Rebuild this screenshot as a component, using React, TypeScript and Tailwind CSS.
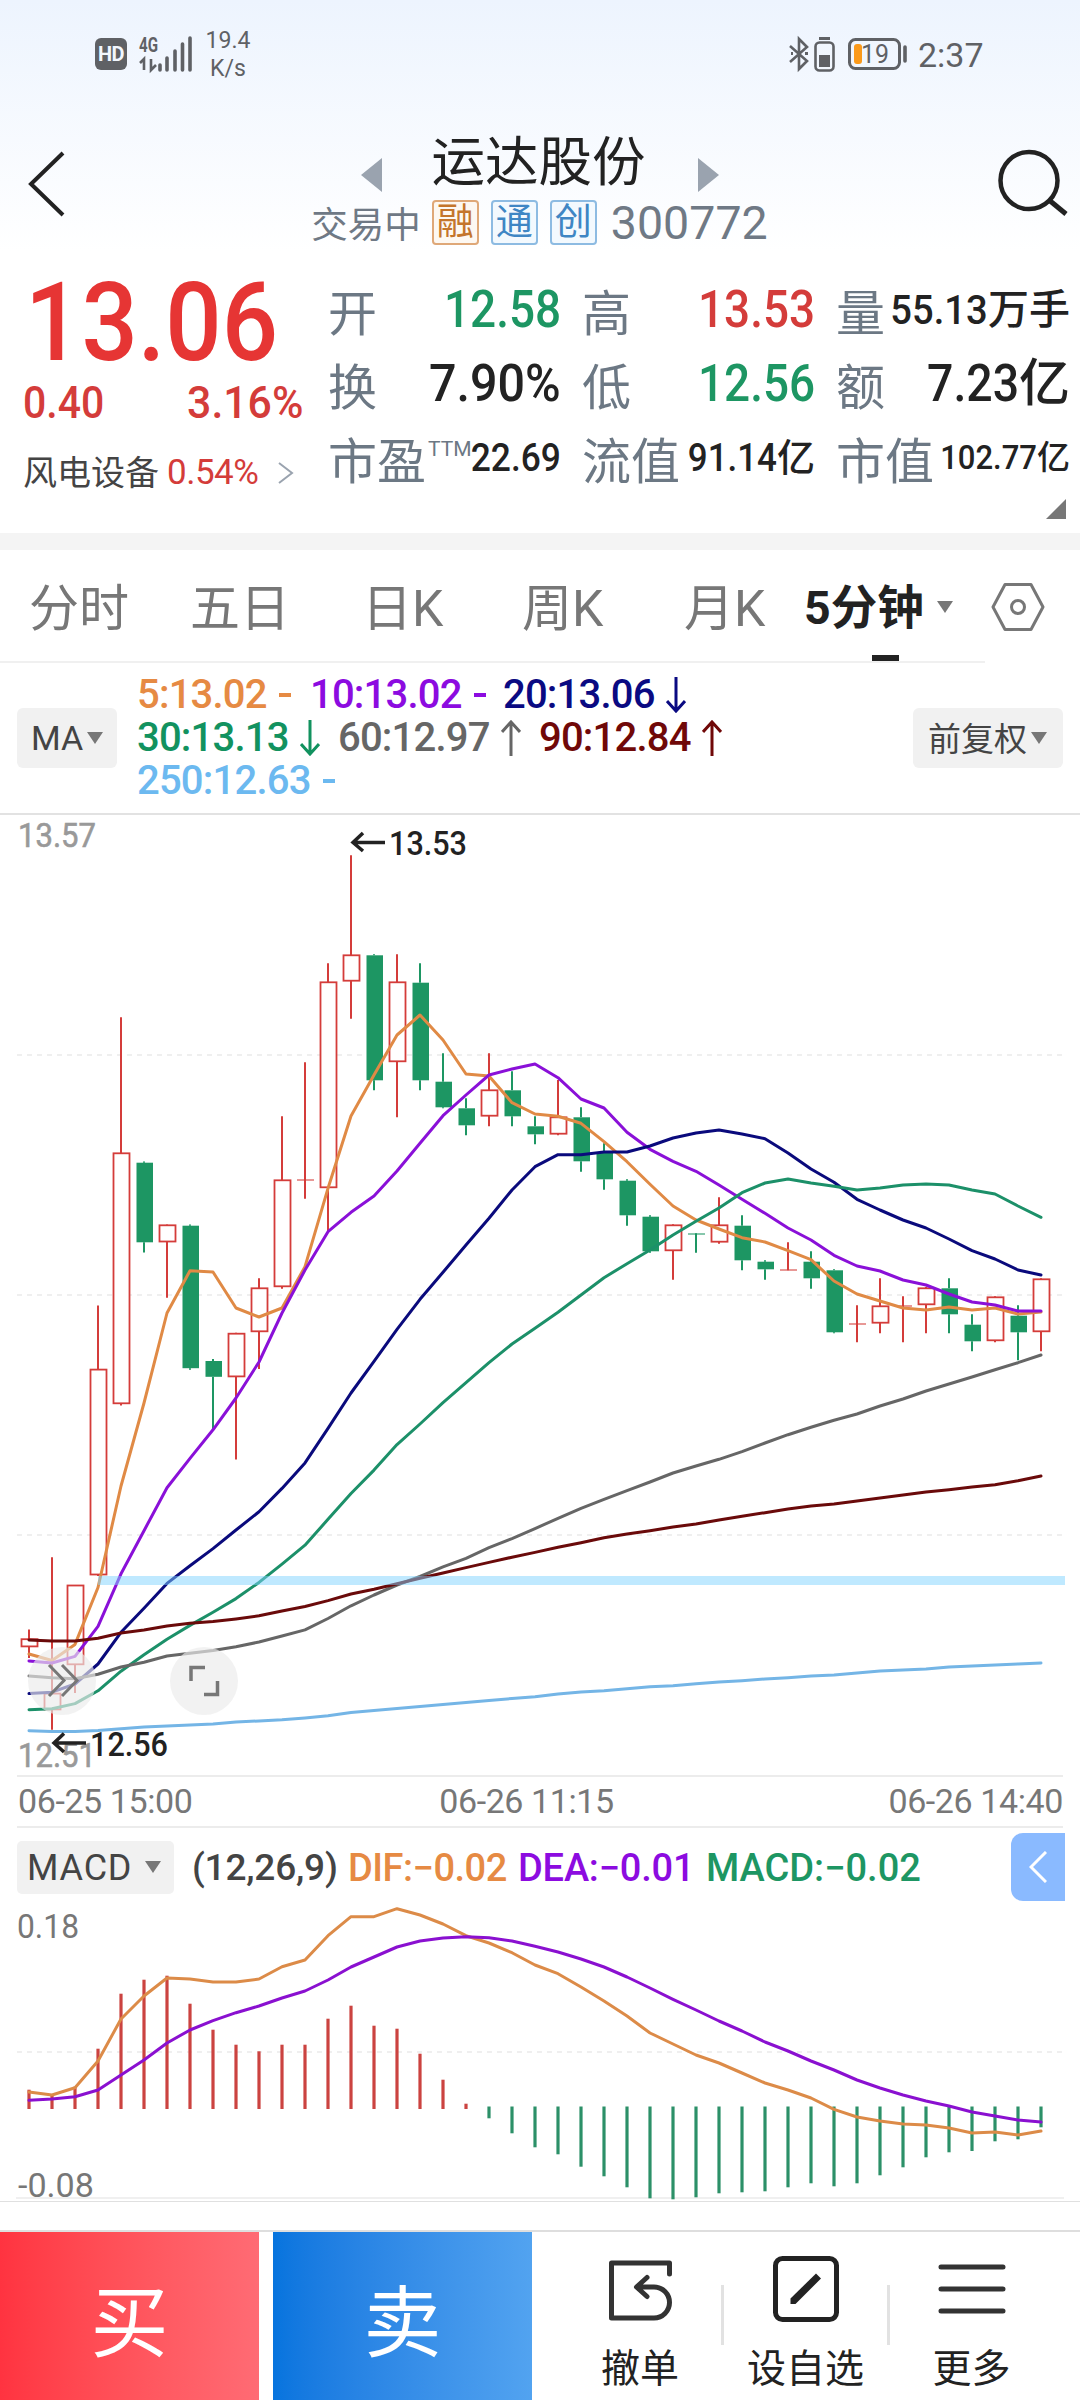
import { ReactNode } from 'react';
import clsx from 'clsx';

const RED = '#d43c3a';
const GREEN = '#1d9663';

const STEP = 23;
const FIRST_X = 29;
const xAt = (i: number) => FIRST_X + i * STEP;

// [direction, high, body top, body bottom, low]
type Candle = ['up' | 'down', number, number, number, number];

const candles: Candle[] = [
    ['up', 1629.5, 1639.2, 1646.4, 1658],
    ['up', 1557.2, 1693.6, 1709.4, 1729.8],
    ['up', 1585, 1585.5, 1664.3, 1693],
    ['up', 1305.5, 1369.6, 1574.5, 1576],
    ['up', 1017.3, 1153.3, 1403.3, 1405.5],
    ['down', 1161.5, 1162.7, 1242.3, 1252.5],
    ['up', 1224.5, 1225.3, 1241.5, 1297.7],
    ['down', 1224.5, 1225.7, 1368.2, 1369.7],
    ['down', 1359, 1361, 1376.8, 1429],
    ['up', 1332.7, 1333.7, 1376.4, 1459.4],
    ['up', 1278.3, 1288.3, 1331.3, 1369],
    ['up', 1116.3, 1180.3, 1286.3, 1288.7],
    ['up', 1062.3, 1180, 1180, 1198.7],
    ['up', 963.3, 982.3, 1187.3, 1231.7],
    ['up', 855.3, 955.3, 980.7, 1018.7],
    ['down', 954.3, 955.3, 1080.3, 1090.3],
    ['up', 954.3, 982.3, 1061.3, 1117.3],
    ['down', 963.3, 982.7, 1080.3, 1090.3],
    ['down', 1053.3, 1081.7, 1107.3, 1108.3],
    ['down', 1098.3, 1108.3, 1125.3, 1135.3],
    ['up', 1053.3, 1090.3, 1115.7, 1126.3],
    ['down', 1071.3, 1090.3, 1116.3, 1126.3],
    ['down', 1116.3, 1126.3, 1134.3, 1144.3],
    ['up', 1080, 1117.3, 1133.7, 1135.3],
    ['down', 1107.3, 1117.3, 1161.3, 1171.7],
    ['down', 1143.3, 1152.7, 1179.3, 1189.7],
    ['down', 1179.3, 1180.7, 1215.3, 1225.7],
    ['down', 1215.3, 1216.7, 1251.3, 1252.7],
    ['up', 1224.3, 1225.3, 1250.3, 1279.7],
    ['down', 1233.3, 1234, 1234, 1252.7],
    ['up', 1197.3, 1225.3, 1241.7, 1243.7],
    ['down', 1215.3, 1225.7, 1260.3, 1270.3],
    ['down', 1260.3, 1261.7, 1269.3, 1279.7],
    ['up', 1242.3, 1270, 1270, 1270.3],
    ['down', 1251.3, 1261.7, 1278.3, 1288.7],
    ['down', 1269.3, 1270.3, 1332.3, 1333.3],
    ['up', 1305.3, 1324, 1324, 1342.3],
    ['up', 1278.3, 1306.3, 1322.7, 1333.3],
    ['up', 1296.3, 1306, 1306, 1342.3],
    ['up', 1287, 1288.3, 1304.3, 1333.3],
    ['down', 1278.3, 1288.3, 1314.3, 1333.3],
    ['down', 1314.3, 1324.7, 1341.3, 1351.3],
    ['up', 1296.3, 1297.3, 1340.3, 1342.3],
    ['down', 1305.3, 1315.7, 1332.3, 1360.3],
    ['up', 1278.3, 1279.3, 1331.3, 1351.3],
];

const ma5 = [1654, 1660.5, 1644.4, 1587.5, 1486, 1403, 1313, 1270.7, 1272, 1308, 1317, 1308, 1266.7, 1188.3, 1116, 1075, 1035, 1015, 1040, 1074, 1076, 1102.7, 1114, 1116.3, 1123.3, 1141.7, 1161.7, 1184.3, 1206, 1220, 1229, 1237.7, 1242, 1250.7, 1259.7, 1281, 1294, 1301, 1308, 1310, 1307, 1310, 1308, 1314, 1312];
const ma10 = [1661, 1663, 1656.4, 1626.4, 1573.8, 1530.7, 1487.7, 1458.4, 1429.8, 1398, 1362, 1313, 1270, 1231.7, 1212.3, 1196, 1171, 1143.3, 1115.7, 1095, 1075, 1069, 1064, 1077.7, 1099, 1108, 1132.3, 1149.3, 1161.3, 1171.3, 1185, 1199.3, 1213.3, 1228, 1240, 1255.3, 1266, 1271, 1280, 1285, 1294, 1302, 1305, 1311, 1311];
const ma20 = [1693.6, 1692.2, 1684, 1664, 1632.3, 1608.2, 1583.4, 1565.8, 1548.6, 1530, 1511.8, 1488.4, 1462.9, 1428.4, 1393, 1361.3, 1329.3, 1299.3, 1272.3, 1245, 1218.3, 1190, 1166.7, 1154.7, 1154.7, 1152, 1152, 1146, 1138, 1133, 1130, 1134, 1138.7, 1153, 1169, 1182.3, 1199.3, 1210, 1220, 1228, 1239, 1250.7, 1259, 1270, 1275];
const ma30 = [1709.8, 1708.8, 1703.6, 1690.8, 1671.2, 1654.7, 1639.2, 1625.4, 1612.3, 1598.6, 1582.4, 1564.1, 1545.2, 1519.3, 1493.5, 1470.1, 1444.6, 1424, 1402.6, 1382.6, 1362.7, 1344, 1328.2, 1312.3, 1295, 1277.7, 1263.7, 1250, 1235, 1221.3, 1208, 1192.7, 1183, 1179, 1183, 1186.3, 1190, 1188, 1185, 1184, 1185, 1190, 1194, 1206, 1217.3];
const ma60 = [1676, 1677.8, 1678.8, 1674.3, 1667, 1662.3, 1656, 1653.3, 1650.5, 1646.8, 1642, 1636, 1629.9, 1618.5, 1605.8, 1595, 1585, 1576.5, 1566.9, 1558.3, 1547.6, 1538.6, 1528.6, 1518.3, 1508.3, 1499.3, 1490.7, 1482, 1473, 1466, 1459.3, 1451.7, 1443, 1434.7, 1427.3, 1420.3, 1414, 1406, 1399, 1391, 1384, 1377, 1369.7, 1362.7, 1355];
const ma90 = [1639.9, 1641, 1641, 1638.2, 1633, 1629.9, 1626, 1623.3, 1621.6, 1618.9, 1615.8, 1611, 1606.5, 1600.6, 1594, 1589.3, 1583.7, 1578.2, 1573, 1567.6, 1562.4, 1557.2, 1552.4, 1547.3, 1542.7, 1537.7, 1534, 1530.7, 1527, 1524, 1520, 1516.3, 1512.7, 1509, 1506, 1504, 1501, 1498, 1495, 1492, 1489.7, 1487, 1484.7, 1480.7, 1476];
const ma250 = [1730.8, 1731.5, 1731.5, 1730.4, 1728.7, 1727, 1726, 1725, 1723.9, 1722, 1720.9, 1719.8, 1717.9, 1715.7, 1712.5, 1710.5, 1708.6, 1706.6, 1704.6, 1702.5, 1700.5, 1698.5, 1696.8, 1694, 1692, 1690.7, 1688.7, 1686.7, 1685.7, 1683.8, 1682, 1680.7, 1679, 1677.7, 1676, 1675, 1673, 1671, 1670, 1669, 1667, 1666, 1665, 1664, 1663];

const dif = [2092, 2095, 2087.7, 2061, 2019, 1996, 1978, 1979, 1982, 1982, 1979, 1966.7, 1960, 1935.7, 1916.7, 1916.7, 1908.7, 1915, 1924, 1935.7, 1943, 1952.7, 1965, 1973.7, 1987, 2001, 2016, 2033, 2044, 2055, 2063, 2073, 2083, 2090, 2098, 2109.3, 2117, 2121, 2124, 2125, 2128, 2133, 2132, 2135, 2131];
const dea = [2100.3, 2099, 2096.7, 2090, 2075, 2060, 2043, 2030, 2020.7, 2012.7, 2006, 1998, 1991, 1980, 1967, 1957, 1947, 1941, 1938, 1936.7, 1937.7, 1941, 1946.3, 1952, 1959, 1967, 1977, 1988, 1999.3, 2010, 2021, 2031, 2042, 2051, 2061, 2070, 2080, 2088, 2095, 2101, 2106, 2112, 2116, 2120, 2122];
const hist = [2089.7, 2095.7, 2086.7, 2048.7, 1993.7, 1979.7, 1975.7, 2003.7, 2029.7, 2044.7, 2051.3, 2044.7, 2044.7, 2018.7, 2005.7, 2025.7, 2028.7, 2053.7, 2079.7, 2103.7, 2118.3, 2133.3, 2147.3, 2154.3, 2166.7, 2176.3, 2187.3, 2198.3, 2199.3, 2197.3, 2193.3, 2192.3, 2191.3, 2187.3, 2183.3, 2186.3, 2183.3, 2175.3, 2167.3, 2157.3, 2152.3, 2151, 2141.3, 2139.3, 2127.3];

const Line = ({ data, color, width = 3 }: { data: number[]; color: string; width?: number }) => (
    <polyline
        points={data.map((y, i) => `${xAt(i)},${y}`).join(' ')}
        fill="none"
        stroke={color}
        strokeWidth={width}
        strokeLinejoin="round"
        strokeLinecap="round"
    />
);

const Caret = ({ className }: { className?: string }) => (
    <svg viewBox="0 0 16 12" className={clsx('w-4 h-3 shrink-0', className)}>
        <path d="M0 0H16L8 12Z" fill="#777" />
    </svg>
);

function StatusBar() {
    return (
        <div className="h-[108px] flex items-center text-[#5f6165]">
            <div className="ml-[95px] w-8 h-8 rounded-md bg-[#5f6165] text-[#f2f7fe] text-[20px] font-bold flex items-center justify-center tracking-tight">HD</div>
            <svg viewBox="138 34 56 40" className="ml-[11px] w-14 h-10">
                <text x="139" y="52" fontSize="20" fontWeight="700" fill="#5f6165" textLength="19" lengthAdjust="spacingAndGlyphs">4G</text>
                <path d="M140 63L144 59V70M151 59V70L156 65" fill="none" stroke="#5f6165" strokeWidth="2.6" />
                <path d="M160 65V70M167 58V70M175 51V70M182.500 44V70M190 38V70" stroke="#5f6165" strokeWidth="3.600" strokeLinecap="round" />
            </svg>
            <div className="mt-[2px] ml-[10px] text-[23px] leading-[28px] w-12 text-center">
                <div>19.4</div>
                <div>K/s</div>
            </div>
            <svg viewBox="786 34 126 40" className="ml-auto w-[126px] h-10">
                <path d="M790 46L807 61L799 69V39L807 47L790 62" fill="none" stroke="#5f6165" strokeWidth="2.600" />
                <path d="M791 53.500H793M805 53.500H808" stroke="#5f6165" strokeWidth="3" />
                <rect x="815.500" y="42.500" width="18" height="28" rx="4" fill="none" stroke="#5f6165" strokeWidth="2.600" />
                <path d="M819 38.500H830" stroke="#5f6165" strokeWidth="3" />
                <rect x="819" y="55" width="11" height="12" fill="#5f6165" />
                <rect x="849.500" y="39.500" width="50" height="29" rx="6" fill="none" stroke="#5f6165" strokeWidth="3" />
                <path d="M905 47V61" stroke="#5f6165" strokeWidth="3.600" strokeLinecap="round" />
                <rect x="854" y="44" width="8" height="20" rx="3" fill="#fb9a1b" />
                <text x="861" y="63" fontSize="25" fill="#5f6165" textLength="28" lengthAdjust="spacingAndGlyphs">19</text>
            </svg>
            <div className="pt-[2px] ml-[6px] mr-[96px] w-[66px] text-[34px] leading-none whitespace-nowrap">2:37</div>
        </div>
    );
}

function Badge({ children, className }: { children: ReactNode; className: string }) {
    return (
        <span className={clsx('w-[47px] h-[45px] border-2 rounded-[4px] flex items-center justify-center text-[37px] leading-none', className)}>
            {children}
        </span>
    );
}

function TitleBar() {
    return (
        <div className="h-[144px] flex items-start justify-between">
            <svg viewBox="26 148 42 72" className="mt-10 ml-[26px] w-[42px] h-[72px]">
                <path d="M63 153L31 184L63 215" fill="none" stroke="#222" strokeWidth="4" />
            </svg>
            <div className="pl-[17px] w-[720px] flex flex-col items-center">
                <div className="mt-[25px] h-[54px] flex items-center">
                    <svg viewBox="0 0 21 34" className="mt-[30px] mr-[50px] w-[21px] h-[34px]">
                        <path d="M21 0V34L0 17Z" fill="#9aa3af" />
                    </svg>
                    <h1 className="pt-[5px] text-[53.5px] leading-[54px] text-[#222]">运达股份</h1>
                    <svg viewBox="0 0 21 34" className="mt-[30px] ml-[52px] w-[21px] h-[34px]">
                        <path d="M0 0V34L21 17Z" fill="#9aa3af" />
                    </svg>
                </div>
                <div className="mt-[13px] h-[45px] flex items-center text-[#6f7985]">
                    <span className="pt-[5px] text-[36.5px] leading-[45px] mr-[11px]">交易中</span>
                    <Badge className="mr-3 text-[#c4752c] border-[#dfa878] bg-[#fdf8f2]">融</Badge>
                    <Badge className="mr-3 text-[#3f86c4] border-[#8dbbe2] bg-[#f3f9fe]">通</Badge>
                    <Badge className="mr-[14px] text-[#3f86c4] border-[#8dbbe2] bg-[#f3f9fe]">创</Badge>
                    <span className="pt-[2px] text-[46.5px] leading-[45px]">300772</span>
                </div>
            </div>
            <svg viewBox="994 146 76 74" className="mt-[38px] mr-[10px] w-[76px] h-[74px]">
                <circle cx="1029" cy="180.500" r="28.500" fill="none" stroke="#222" strokeWidth="4.500" />
                <path d="M1049 200L1066 214" stroke="#222" strokeWidth="5" />
            </svg>
        </div>
    );
}

interface StatProps {
    label: string;
    sup?: string;
    value: string;
    unit?: string;
    className: string;
    scale?: string;
}

function Stat({ label, sup, value, unit, className, scale = 'scale-x-[0.9]' }: StatProps) {
    return (
        <div className="h-[74px] flex items-center justify-between whitespace-nowrap">
            <span className="pt-3 flex text-[49px] leading-[66px] text-[#6c7884]">
                {label}
                {sup && <sup className="ml-[2px] top-0 text-[21px] leading-[38px]">{sup}</sup>}
            </span>
            <span className={clsx('-ml-6 pt-[2px] flex font-medium leading-[74px]', className)}>
                <span className={clsx('origin-right', scale)}>{value}</span>
                {unit}
            </span>
        </div>
    );
}

function Quote() {
    return (
        <div className="relative h-[281px] flex pt-5">
            <div className="w-[305px] shrink-0 pl-[23px]">
                <div className="h-[98px] pt-[2px] pl-[2px] text-[109px] leading-[98px] font-medium text-[#e63534]">
                    <span className="inline-block scale-x-[0.91] origin-left">13.06</span>
                </div>
                <div className="h-[64px] pt-px pr-[2px] flex justify-between text-[45px] leading-[64px] font-medium text-[#d43c3a]">
                    <span className="scale-x-[0.91] origin-left">0.40</span>
                    <span className="scale-x-[0.95] origin-right">3.16%</span>
                </div>
                <div className="mt-1 flex items-center text-[34px] leading-[70px] text-[#444]">
                    风电设备
                    <span className="ml-2 text-[35px] tracking-[-0.5px] text-[#d43c3a]">0.54%</span>
                    <svg viewBox="0 0 16 22" className="ml-5 w-4 h-[22px]">
                        <path d="M1 1L14 11L1 21" fill="none" stroke="#9aa3af" strokeWidth="2" />
                    </svg>
                </div>
            </div>
            <div className="ml-[23px] w-[233px]">
                <Stat label="开" value="12.58" className="text-[51px] text-[#1d9663]" />
                <Stat label="换" value="7.90%" className="text-[51px] text-[#222]" scale="scale-x-[0.95]" />
                <Stat label="市盈" sup="TTM" value="22.69" className="text-[38px] text-[#222]" scale="scale-x-[0.93]" />
            </div>
            <div className="ml-[21px] w-[233px]">
                <Stat label="高" value="13.53" className="text-[51px] text-[#d43c3a]" />
                <Stat label="低" value="12.56" className="text-[51px] text-[#1d9663]" />
                <Stat label="流值" value="91.14" unit="亿" className="text-[38px] text-[#222]" scale="scale-x-[0.92]" />
            </div>
            <div className="ml-[21px] w-[234px]">
                <Stat label="量" value="55.13" unit="万手" className="text-[41px] text-[#222]" scale="scale-x-[0.93]" />
                <Stat label="额" value="7.23" unit="亿" className="text-[51px] text-[#222]" scale="scale-x-[0.91]" />
                <Stat label="市值" value="102.77" unit="亿" className="text-[33px] text-[#222]" scale="scale-x-[0.94]" />
            </div>
            <svg viewBox="0 0 20 20" className="absolute right-[14px] bottom-[14px] w-5 h-5">
                <path d="M20 0V20H0Z" fill="#777" />
            </svg>
        </div>
    );
}

const tabs = [
    { label: '分时', className: 'w-[161px]' },
    { label: '五日', className: 'w-[172px]' },
    { label: '日K', className: 'w-[160px]' },
    { label: '周K', className: 'w-[162px]' },
    { label: '月K', className: 'w-[120px]' },
];

function PeriodTabs() {
    return (
        <div className="relative h-[113px] flex items-center pl-[29px] text-[50px] text-[#777]">
            {tabs.map((t) => (
                <div key={t.label} className={clsx('pt-[5px] shrink-0 leading-[108px] whitespace-nowrap', t.className)}>{t.label}</div>
            ))}
            <div className="shrink-0 pt-[4px] w-[120px] text-[46.5px] font-bold text-[#222] whitespace-nowrap">5分钟</div>
            <Caret className="ml-[13px]" />
            <svg viewBox="990 578 58 56" className="ml-[36px] shrink-0 w-[58px] h-14">
                <path d="M1006 583.500H1032L1044 606L1032 628.500H1006L994 606Z" fill="none" stroke="#777" strokeWidth="3" strokeLinejoin="round" />
                <circle cx="1019" cy="606" r="6.500" fill="none" stroke="#777" strokeWidth="3" />
            </svg>
            <div className="absolute left-0 bottom-0 w-[985px] h-[2px] bg-[#f0f0f0]" />
            <div className="absolute left-[872px] bottom-[2px] w-[27px] h-[6px] bg-[#222]" />
        </div>
    );
}

function Trend({ dir }: { dir: 'up' | 'down' | 'flat' }) {
    if (dir === 'flat') {
        return (
            <svg viewBox="0 0 12 36" className="ml-[12px] w-3 h-9">
                <path d="M0 18H12" stroke="currentColor" strokeWidth="4" />
            </svg>
        );
    }
    return (
        <svg viewBox="0 0 20 36" className={clsx('ml-[11px] w-5 h-9', dir === 'up' && 'rotate-180')}>
            <path d="M10 0V34M1 24L10 34L19 24" fill="none" stroke="currentColor" strokeWidth="3" />
        </svg>
    );
}

const maRows = [
    [
        { text: '5:13.02', dir: 'flat', className: 'text-[#e68a43] w-[173px]' },
        { text: '10:13.02', dir: 'flat', className: 'text-[#8c0be0] w-[193px]' },
        { text: '20:13.06', dir: 'down', className: 'text-[#0a0a82]' },
    ],
    [
        { text: '30:13.13', dir: 'down', className: 'text-[#12925f] w-[201px]' },
        { text: '60:12.97', dir: 'up', className: 'text-[#666] w-[201px]' },
        { text: '90:12.84', dir: 'up', className: 'text-[#700808]' },
    ],
    [{ text: '250:12.63', dir: 'flat', className: 'text-[#6cb9f0]' }],
] as const;

function MaBar() {
    return (
        <div className="h-[150px] flex items-center pl-[17px] pr-[17px]">
            <div className="w-[100px] h-[60px] rounded-md bg-[#f1f1f1] flex items-center justify-center text-[34px] text-[#444]">
                MA
                <Caret className="ml-1" />
            </div>
            <div className="-mt-px ml-[20px] flex flex-col">
                {maRows.map((row, i) => (
                    <div key={i} className="flex h-[43px]">
                        {row.map((m) => (
                            <div key={m.text} className={clsx('flex items-center text-[40px] tracking-[-0.8px] font-medium leading-[43px] whitespace-nowrap', m.className)}>
                                {m.text}
                                <Trend dir={m.dir} />
                            </div>
                        ))}
                    </div>
                ))}
            </div>
            <div className="ml-auto w-[150px] h-[60px] rounded-md bg-[#f1f1f1] flex items-center justify-center text-[33px] text-[#444]">
                <span className="pt-[4px] -ml-px">前复权</span>
                <Caret className="ml-1" />
            </div>
        </div>
    );
}

function KChart() {
    return (
        <svg viewBox="0 815 1080 960" className="block w-[1080px] h-[960px]">
            {[1055, 1295, 1535].map((y) => (
                <path key={y} d={`M17 ${y}H1062`} stroke="#efefef" strokeWidth="2" strokeDasharray="5 5" />
            ))}
            <text x="18" y="847" fontSize="34" fill="#999" stroke="#999" strokeWidth="0.600" textLength="78" lengthAdjust="spacingAndGlyphs">13.57</text>
            <text x="18" y="1767" fontSize="34" fill="#999" stroke="#999" strokeWidth="0.600" textLength="78" lengthAdjust="spacingAndGlyphs">12.51</text>

            {candles.map(([dir, high, top, bottom, low], i) => {
                const x = xAt(i);
                const color = dir === 'up' ? RED : GREEN;
                if (top === bottom) {
                    return (
                        <g key={i} stroke={color}>
                            <path d={`M${x} ${high}V${low}`} strokeWidth="2" />
                            <path d={`M${x - 8} ${top}H${x + 9}`} strokeWidth="1.500" opacity="0.7" />
                        </g>
                    );
                }
                return (
                    <g key={i} stroke={color} strokeWidth="2">
                        <path d={`M${x} ${high}V${top}M${x} ${bottom}V${low}`} />
                        {dir === 'up' ? (
                            <rect x={x - 7.5} y={top} width="16" height={bottom - top} fill="#fff" strokeWidth="1.800" />
                        ) : (
                            <rect x={x - 7.5} y={top} width="16.500" height={bottom - top} fill={color} stroke="none" />
                        )}
                    </g>
                );
            })}

            <Line data={ma5} color="#e08a45" />
            <Line data={ma10} color="#8a10d8" />
            <Line data={ma20} color="#0a0a7c" />
            <Line data={ma30} color="#1c9069" />
            <Line data={ma60} color="#666" />
            <Line data={ma90} color="#6a0a0a" />
            <Line data={ma250} color="#74b5e6" />
            <rect x="98" y="1576" width="967" height="9" fill="#7fd4ff" opacity="0.500" />

            <g fill="none" stroke="#222" strokeWidth="3.500">
                <path d="M385 842.500H353M363 833L353 842.500L363 851" />
                <path d="M86 1743H54M64 1733.500L54 1743L64 1752" />
            </g>
            <g fontSize="34" fontWeight="500" fill="#222">
                <text x="389" y="855" textLength="78" lengthAdjust="spacingAndGlyphs">13.53</text>
                <text x="90" y="1756" textLength="78" lengthAdjust="spacingAndGlyphs">12.56</text>
            </g>

            <circle cx="62" cy="1681" r="34" fill="#ebebeb" opacity="0.660" />
            <circle cx="204" cy="1681" r="34" fill="#ebebeb" opacity="0.660" />
            <path d="M49 1665L64 1680.500L49 1696M62 1665L77 1680.500L62 1696" fill="none" stroke="#777" strokeWidth="3" />
            <path d="M191 1681V1667.500H205M204 1694.500H217.500V1681" fill="none" stroke="#777" strokeWidth="3.500" />
        </svg>
    );
}

function MacdPanel() {
    return (
        <div>
            <div className="h-[78px] flex items-center pl-[17px] pr-[15px] font-medium text-[38px] whitespace-nowrap">
                <div className="w-[157px] h-[53px] rounded-[5px] bg-[#f1f1f1] flex items-center pl-[10px] text-[36px] leading-[53px] font-normal text-[#444]">
                    <span className="pt-[2px] w-[118px] tracking-[0.8px]">MACD</span>
                    <Caret />
                </div>
                <span className="pt-[2px] ml-[18px] w-[156px] text-[37px] tracking-[-0.2px] text-[#444]">(12,26,9)</span>
                <span className="pt-[2px] w-[170px] tracking-[-0.5px] text-[#e68a43]">DIF:−0.02</span>
                <span className="pt-[2px] w-[188px] tracking-[-0.2px] text-[#8c0be0]">DEA:−0.01</span>
                <span className="pt-[2px] text-[#1d9663]">MACD:−0.02</span>
                <div className="ml-auto w-[54px] h-[68px] rounded-l-xl bg-[#8abaff] flex items-center justify-center">
                    <svg viewBox="0 0 18 32" className="w-[18px] h-8">
                        <path d="M17 1L2 16L17 31" fill="none" stroke="#fff" strokeWidth="3" />
                    </svg>
                </div>
            </div>
            <svg viewBox="0 1906 1080 297" className="block w-[1080px] h-[297px]">
                <path d="M17 2052H1062" stroke="#efefef" strokeWidth="2" strokeDasharray="5 5" />
                <path d="M16 2198H1064" stroke="#f0f0f0" strokeWidth="2" />
                <path d="M0 2201.500H1080" stroke="#e0e0e0" strokeWidth="1" />
                {hist.map((y, i) => {
                    const up = y < 2108;
                    return <path key={i} d={`M${xAt(i)} ${up ? 2109 : 2106.5}V${y}`} stroke={up ? '#cb4340' : '#2c9068'} strokeWidth="3.200" />;
                })}
                <Line data={dif} color="#dc8b48" width={3} />
                <Line data={dea} color="#8a10d0" width={3} />
                <g fontSize="33" fill="#777">
                    <text x="17" y="1938" textLength="62" lengthAdjust="spacingAndGlyphs">0.18</text>
                    <text x="18" y="2197" textLength="76" lengthAdjust="spacingAndGlyphs">-0.08</text>
                </g>
            </svg>
        </div>
    );
}

function BottomBar() {
    return (
        <div className="mt-[27px] border-t-2 border-[#dedede] h-[170px] flex text-[39px] text-[#222]">
            <div className="w-[259px] h-[168px] pt-[16px] bg-gradient-to-r from-[#ff3340] to-[#ff6b74] flex items-center justify-center text-[78px] text-white">买</div>
            <div className="ml-[14px] w-[259px] h-[168px] pt-[16px] bg-gradient-to-r from-[#0674de] to-[#52a3f0] flex items-center justify-center text-[78px] text-white">卖</div>
            <div className="ml-[26px] w-[164px] flex flex-col items-center">
                <svg viewBox="606 2252 70 72" className="mt-5 w-[70px] h-[72px]">
                    <path d="M670.500 2274V2263H612.500V2318H655A15.500 15.500 0 0 0 655 2287H638M648 2277.500L637.500 2287L648 2296.500" fill="none" stroke="#333" strokeWidth="5" strokeLinejoin="round" strokeLinecap="round" />
                </svg>
                <span className="mt-[15px] leading-[60px]">撤单</span>
            </div>
            <div className="mt-[53px] -ml-px w-[3px] h-[60px] bg-[#e2e2e2]" />
            <div className="w-[163px] flex flex-col items-center">
                <svg viewBox="770 2252 72 72" className="mt-5 w-[72px] h-[72px]">
                    <rect x="775.500" y="2258.500" width="61" height="61" rx="7" fill="none" stroke="#222" strokeWidth="5" />
                    <path d="M790.500 2298.500L816 2273.500L821 2278.500L795.500 2304H790.500Z" fill="#222" />
                </svg>
                <span className="mt-[15px] leading-[60px]">设自选</span>
            </div>
            <div className="mt-[53px] w-[3px] h-[60px] bg-[#e2e2e2]" />
            <div className="w-[163px] flex flex-col items-center">
                <svg viewBox="936 2252 72 72" className="mt-5 w-[72px] h-[72px]">
                    <path d="M941 2267H1003M941 2289H1003M941 2311H1003" stroke="#333" strokeWidth="5" strokeLinecap="round" />
                </svg>
                <span className="mt-[15px] leading-[60px]">更多</span>
            </div>
        </div>
    );
}

export default function App() {
    return (
        <div className="w-[1080px] h-[2400px] overflow-hidden bg-white font-['Roboto','Noto_Sans_CJK_SC',sans-serif]">
            <div className="bg-gradient-to-b from-[#edf4fe] to-white">
                <StatusBar />
                <TitleBar />
            </div>
            <Quote />
            <div className="h-[17px] bg-[#f4f4f4]" />
            <PeriodTabs />
            <MaBar />
            <div className="h-[2px] bg-[#e2e2e2]" />
            <KChart />
            <div className="mx-[17px] h-[2px] bg-[#ececec]" />
            <div className="mx-[17px] pl-px h-[49px] flex items-center justify-between text-[34px] tracking-[-0.4px] text-[#777]">
                <span>06-25 15:00</span>
                <span className="mr-[28px]">06-26 11:15</span>
                <span>06-26 14:40</span>
            </div>
            <div className="mx-[17px] h-[2px] bg-[#ececec]" />
            <MacdPanel />
            <BottomBar />
        </div>
    );
}
